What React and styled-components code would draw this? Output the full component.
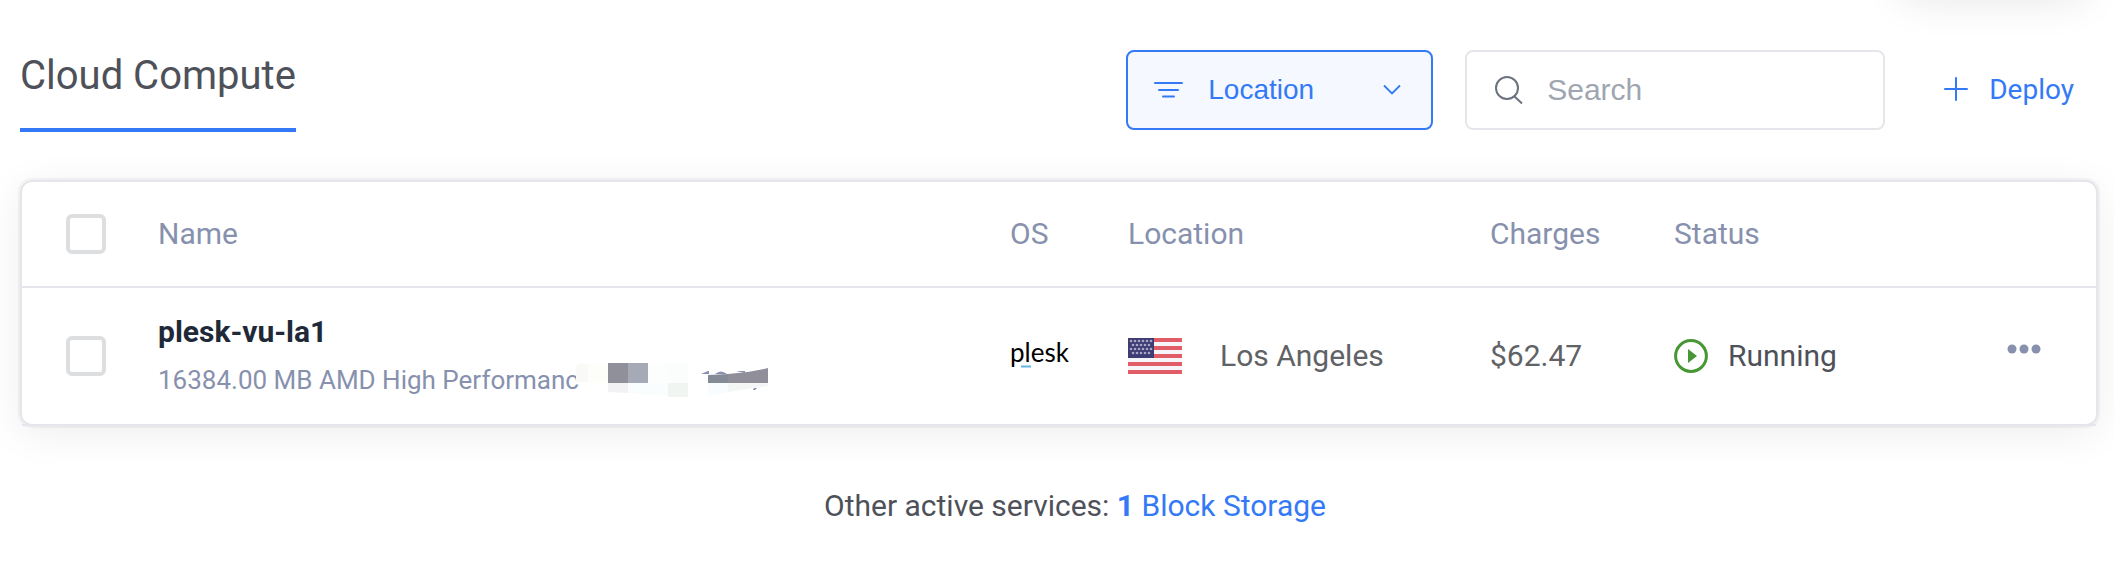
import { useState } from "react";
import styled, { createGlobalStyle } from "styled-components";

const GlobalStyle = createGlobalStyle`
  * {
    box-sizing: border-box;
  }

  body {
    margin: 0;
    background: #ffffff;
    color: #4e5159;
    font-family: Roboto, "Liberation Sans", sans-serif;
    font-size: 30px;
    line-height: 36px;
    overflow-x: hidden;
  }

  button,
  input {
    margin: 0;
    font-family: inherit;
  }
`;

const Page = styled.main`
  padding: 0 16px 36px 20px;
`;

/* card of the section above, only its shadow reaches this one */
const PreviousCard = styled.div`
  width: 184px;
  height: 40px;
  margin: -40px 12px 0 auto;
  border-radius: 8px;
  box-shadow: 0 0 40px rgba(0, 0, 0, 0.1);
`;

const Toolbar = styled.header`
  display: flex;
  align-items: flex-start;
  justify-content: space-between;
  padding-top: 50px;
`;

const Title = styled.h1`
  margin: 0;
  height: 82px;
  border-bottom: 4px solid #347af6;
  color: #4e5159;
  font-size: 40px;
  font-weight: 400;
  line-height: 52px;
`;

const Actions = styled.div`
  display: flex;
  align-items: center;
  gap: 32px;
`;

const FilterButton = styled.button`
  display: flex;
  align-items: center;
  width: 307px;
  height: 80px;
  padding: 0 30px 0 26px;
  border: 2px solid #347af6;
  border-radius: 8px;
  background: #f5f8fe;
  color: #347af6;
  font-family: "Liberation Sans", Arial, sans-serif;
  font-size: 28px;
  cursor: pointer;

  span {
    flex: 1;
    padding-left: 24px;
    text-align: left;
  }
`;

const SearchBox = styled.label`
  display: flex;
  align-items: center;
  gap: 24px;
  width: 420px;
  height: 80px;
  padding: 0 28px;
  border: 2px solid #e5e6eb;
  border-radius: 8px;

  svg {
    flex: none;
  }

  input {
    width: 100%;
    padding: 0;
    border: 0;
    outline: 0;
    color: #4e5159;
    font-family: "Liberation Sans", Arial, sans-serif;
    font-size: 30px;
  }

  input::placeholder {
    color: #9fa5b1;
    opacity: 1;
  }
`;

const DeployButton = styled.button`
  display: flex;
  align-items: center;
  gap: 20px;
  height: 80px;
  padding: 0 24px 2px 26px;
  border: 0;
  background: none;
  color: #347af6;
  font-size: 28px;
  font-weight: 400;
  cursor: pointer;
`;

const Card = styled.section`
  height: 246px;
  margin: 48px 0 62px;
  border: 2px solid #e5e6eb;
  border-radius: 12px;
  box-shadow: 0 0 0 2px rgba(0, 0, 0, 0.04), 0 8px 40px rgba(0, 0, 0, 0.07);
`;

const Table = styled.table`
  width: 100%;
  border-spacing: 0;
  table-layout: fixed;
  text-align: left;
`;

const Col = styled.col`
  width: ${({ $width }) => $width}px;
`;

const HeadCell = styled.th`
  height: 106px;
  padding: 0;
  border-bottom: 2px solid #e5e6eb;
  color: #8791ae;
  font-weight: 400;
`;

const Cell = styled.td`
  height: 138px;
  padding: 0;
  border-bottom: 2px solid #e5e6eb;
  color: #606266;
`;

const Checkbox = styled.input`
  display: block;
  appearance: none;
  width: 40px;
  height: 40px;
  margin-left: 44px;
  border: 4px solid #dcdee0;
  border-radius: 6px;
  background: #ffffff;
  cursor: pointer;

  &:checked {
    border-color: #347af6;
    background: #347af6;
  }
`;

const ServerName = styled.a`
  display: block;
  margin-bottom: 12px;
  color: #1f2937;
  font-weight: 700;
  text-decoration: none;
`;

const ServerPlan = styled.div`
  display: flex;
  align-items: center;
  height: 36px;
  color: #8791ae;
  font-size: 26px;

  svg {
    margin-left: -3px;
  }
`;

const PleskLogo = styled.svg`
  display: block;
  overflow: visible;
  font-family: Lato, sans-serif;
`;

const Inline = styled.div`
  display: flex;
  align-items: center;
  gap: ${({ $gap }) => $gap}px;
`;

const Running = styled(Inline)`
  color: #4e5159;
`;

const MoreButton = styled.button`
  display: block;
  margin: 0 55px 15px auto;
  padding: 0;
  border: 0;
  background: none;
  cursor: pointer;

  svg {
    display: block;
  }
`;

const OtherServices = styled.p`
  margin: 0;
  padding-left: 32px;
  color: #4e5159;
  text-align: center;

  a {
    color: #347af6;
    text-decoration: none;
  }
`;

const FilterIcon = () => (
  <svg width="30" height="18" viewBox="0 0 30 18" stroke="currentColor" strokeWidth="2" strokeLinecap="round" aria-hidden="true">
    <path d="M1 2h27M5 9h19M9 15.500h11" />
  </svg>
);

const ChevronIcon = () => (
  <svg width="18" height="12" viewBox="0 0 18 12" fill="none" stroke="currentColor" strokeWidth="1.8" aria-hidden="true">
    <path d="M1 1.500l8 8 8-8" />
  </svg>
);

const SearchIcon = () => (
  <svg width="28" height="28" viewBox="0 0 28 28" fill="none" stroke="#6b7280" strokeWidth="2" aria-hidden="true">
    <circle cx="12" cy="12" r="11" />
    <path d="M19 20l8 7.500" />
  </svg>
);

const PlusIcon = () => (
  <svg width="26" height="26" viewBox="0 0 26 26" stroke="currentColor" strokeWidth="2" strokeLinecap="round" aria-hidden="true">
    <path d="M2 13h22M13 2v22" />
  </svg>
);

/* pixelated strip that hides the address */
const MaskedAddress = () => (
  <svg width="196" height="36" viewBox="0 0 196 36" aria-hidden="true">
    <path d="M0 10V6q0-4 5-4h7v18H0z" fill="#f9faf7" />
    <path d="M12 1h20v20H12z" fill="#fdfdfa" />
    <path d="M72 1h20v20H72z" fill="#fcfefd" />
    <path d="M92 1h20v20H92z" fill="#fafdfc" />
    <path d="M32 1h20v20H32z" fill="#8f909a" />
    <path d="M52 1h20v20H52z" fill="#a6aab6" />
    <path d="M32 21h20v10l-20-1z" fill="#f2f2f5" />
    <path d="M52 21h40v13l-40-3z" fill="#fafdfe" />
    <path d="M92 21h20v14H92z" fill="#f1f5f1" />
    <path d="M125 12l7-3h1v3zM139 12q6-5 12 0zM160 9h9v2z" fill="#8791ae" />
    <path d="M132 13l20-1v9h-20z" fill="#838c96" />
    <path d="M152 12q20-1 40-6v15h-40z" fill="#8f8e99" />
    <path d="M132 21h20v9l-20 4z" fill="#f8fcfe" />
    <path d="M152 21h40v3l-40 6z" fill="#f4f5f5" />
    <path d="M177 28l1-2h3l-2 2z" fill="#8791ae" />
  </svg>
);

const STAR_ROWS = [6, 5, 6, 5];

const UsFlag = () => (
  <svg width="54" height="36" viewBox="0 0 54 36" role="img" aria-label="United States">
    <path fill="#f5f4f8" d="M0 0h54v36H0z" />
    {[0, 8, 16, 24, 32].map((y) => (
      <path key={y} fill="#e05d67" d={`M0 ${y}h54v4H0z`} />
    ))}
    <path fill="#3d3c73" d="M0 0h26v20H0z" />
    {STAR_ROWS.map((count, row) =>
      Array.from({ length: count }, (_, i) => (
        <circle key={`${row}-${i}`} cx={(count === 6 ? 3 : 5) + i * 4} cy={3 + row * 4} r="1.3" fill="#a9a7c4" />
      ))
    )}
  </svg>
);

const RunningIcon = () => (
  <svg width="34" height="34" viewBox="0 0 34 34" fill="none" aria-hidden="true">
    <circle cx="17" cy="17" r="15.400" stroke="#479735" strokeWidth="3" />
    <path d="M14 10l9 7-9 7z" fill="#479735" />
  </svg>
);

const App = () => {
  const [selected, setSelected] = useState(false);
  const toggle = () => setSelected((value) => !value);

  return (
    <>
      <GlobalStyle />
      <Page>
        <PreviousCard />
        <Toolbar>
          <Title>Cloud Compute</Title>
          <Actions>
            <FilterButton type="button">
              <FilterIcon />
              <span>Location</span>
              <ChevronIcon />
            </FilterButton>
            <SearchBox>
              <SearchIcon />
              <input type="text" placeholder="Search" aria-label="Search" />
            </SearchBox>
            <DeployButton type="button">
              <PlusIcon />
              Deploy
            </DeployButton>
          </Actions>
        </Toolbar>

        <Card>
          <Table>
            <colgroup>
              <Col $width={136} />
              <col />
              <Col $width={118} />
              <Col $width={362} />
              <Col $width={184} />
              <Col $width={280} />
              <Col $width={142} />
            </colgroup>
            <thead>
              <tr>
                <HeadCell>
                  <Checkbox type="checkbox" aria-label="Select all" checked={selected} onChange={toggle} />
                </HeadCell>
                <HeadCell>Name</HeadCell>
                <HeadCell>OS</HeadCell>
                <HeadCell>Location</HeadCell>
                <HeadCell>Charges</HeadCell>
                <HeadCell>Status</HeadCell>
                <HeadCell />
              </tr>
            </thead>
            <tbody>
              <tr>
                <Cell>
                  <Checkbox type="checkbox" aria-label="Select plesk-vu-la1" checked={selected} onChange={toggle} />
                </Cell>
                <Cell>
                  <ServerName href="#server">plesk-vu-la1</ServerName>
                  <ServerPlan>
                    16384.00 MB AMD High Performanc
                    <MaskedAddress />
                  </ServerPlan>
                </Cell>
                <Cell>
                  <PleskLogo width="72" height="40" viewBox="0 0 72 40" role="img" aria-label="plesk">
                    <text x="0" y="26" fontSize="26" fontWeight="400" fill="#000000">plesk</text>
                    <path d="M11 29.500h10v2H11z" fill="#5fb8e8" />
                  </PleskLogo>
                </Cell>
                <Cell>
                  <Inline $gap={38}>
                    <UsFlag />
                    Los Angeles
                  </Inline>
                </Cell>
                <Cell>$62.47</Cell>
                <Cell>
                  <Running $gap={20}>
                    <RunningIcon />
                    Running
                  </Running>
                </Cell>
                <Cell>
                  <MoreButton type="button" aria-label="More actions">
                    <svg width="34" height="10" viewBox="0 0 34 10" fill="#8791ae">
                      <circle cx="5" cy="5" r="4.500" />
                      <circle cx="17" cy="5" r="4.500" />
                      <circle cx="29" cy="5" r="4.500" />
                    </svg>
                  </MoreButton>
                </Cell>
              </tr>
            </tbody>
          </Table>
        </Card>

        <OtherServices>
          Other active services: <a href="#block-storage"><b>1</b> Block Storage</a>
        </OtherServices>
      </Page>
    </>
  );
};

export default App;
